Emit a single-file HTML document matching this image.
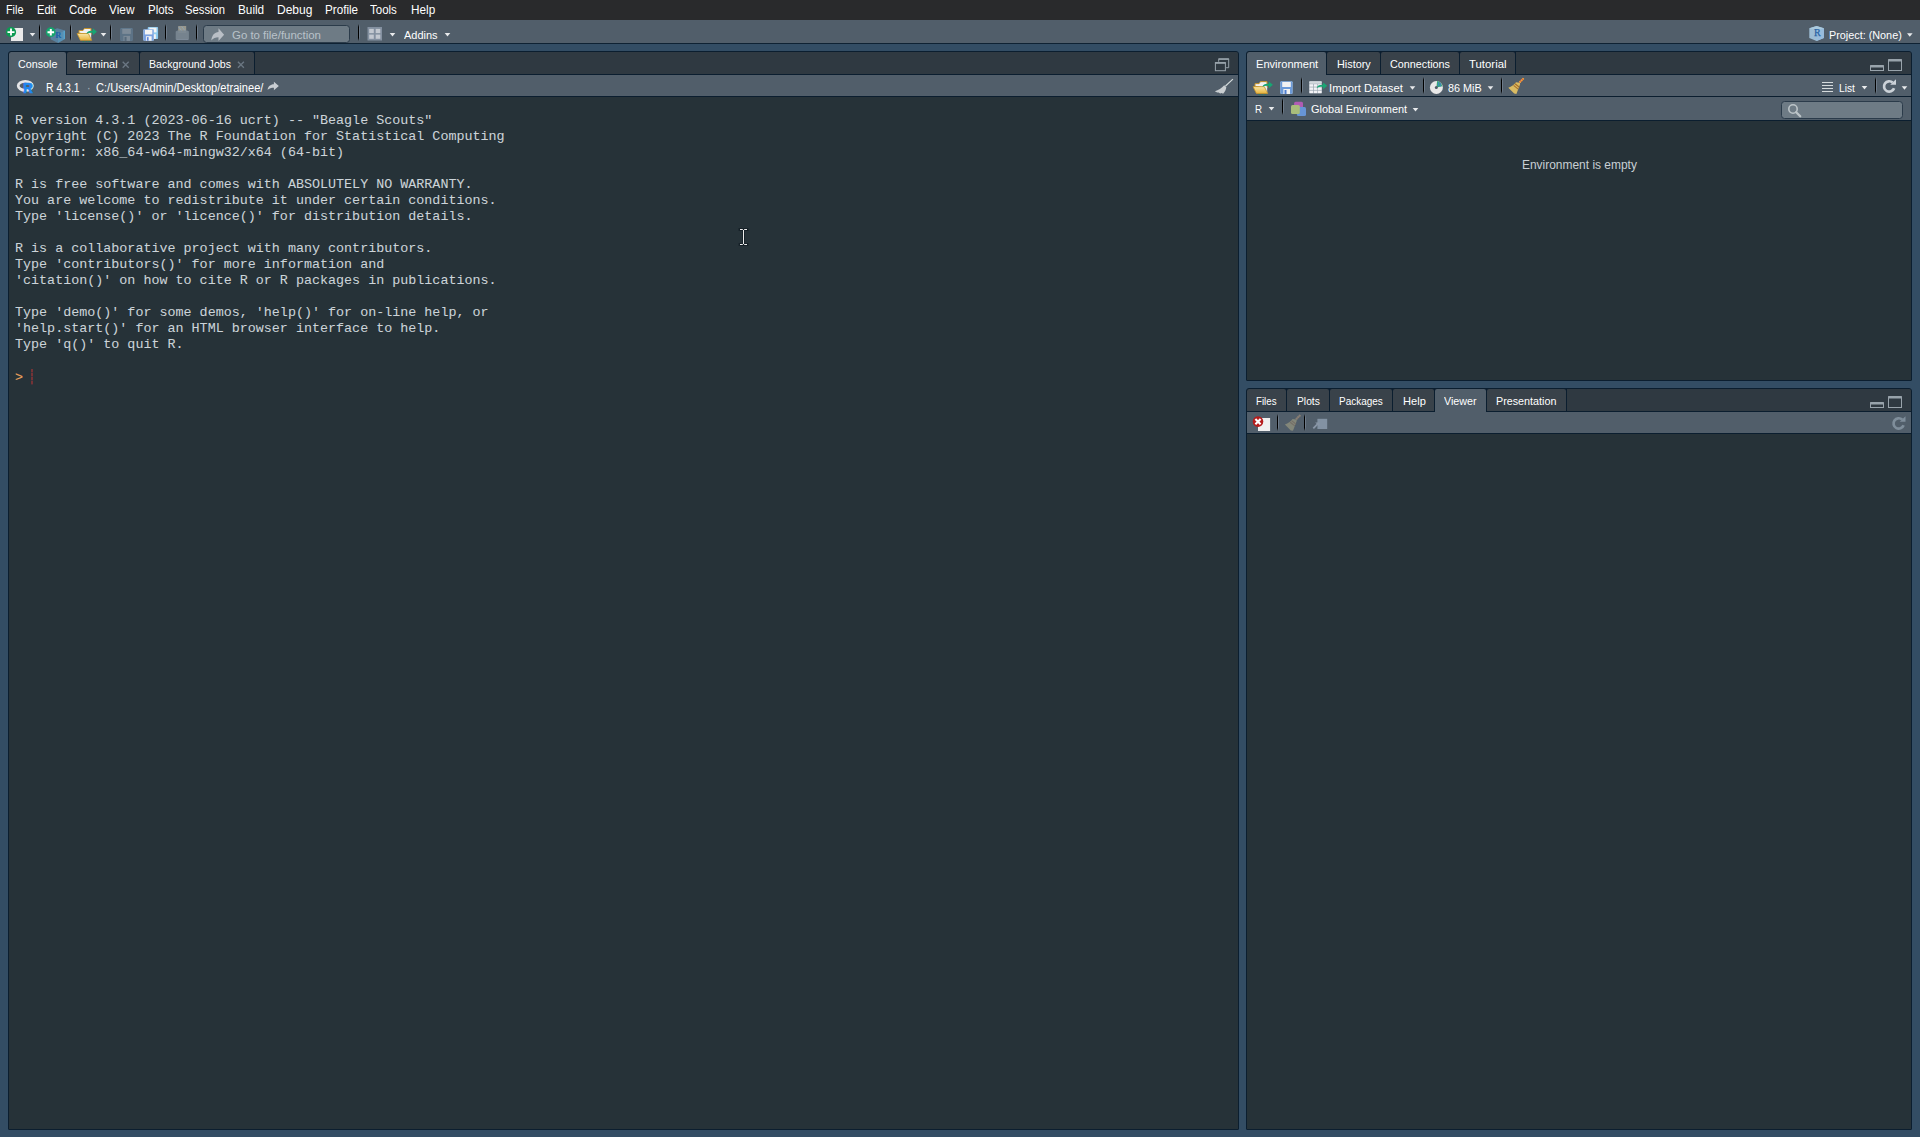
<!DOCTYPE html>
<html lang="en"><head><meta charset="utf-8"><title>RStudio</title>
<style>
html,body{margin:0;padding:0}
body{width:1920px;height:1137px;overflow:hidden;background:#334d64;position:relative;font-family:"Liberation Sans",sans-serif;color:#fff}
#menubar{position:absolute;left:0;top:0;width:1920px;height:20px;background:#292a2c}
#toolbar{position:absolute;left:0;top:20px;width:1920px;height:23px;background:#515e6a;border-bottom:1px solid #0f2233}
.panel{position:absolute;box-sizing:border-box;border:1px solid #0b1e2f;border-radius:3px 3px 1px 1px;background:#263238;overflow:hidden}
.tabs{position:absolute;left:0;top:0;right:0;height:22px;background:#2f3941;border-bottom:1px solid #0b1e2f}
.tabwrap{position:absolute;left:0;top:0;height:22px;background:#0b1e2f}
.tab{position:absolute;top:0;height:22px;background:#39424a;border-radius:2px 2px 0 0}
.tab.act{background:#515e6a;height:23px}
.tb{position:absolute;left:0;right:0;background:#515e6a;border-bottom:1px solid #0b1e2f}
.inp{position:absolute;box-sizing:border-box;background:#6e7b85;border:1px solid #2b3b4a;border-radius:3.5px}
#labels .t{position:absolute;white-space:pre;line-height:16px;transform-origin:0 0;color:#fff}
.f11{font-size:11px}.f12{font-size:12px}
#console{position:absolute;margin:0;left:6px;top:61px;font-family:"Liberation Mono","DejaVu Sans Mono",monospace;font-size:13.38px;line-height:16px;color:#ccd4d9;-webkit-text-stroke:0.06px #ccd4d9;white-space:pre}
#console .p{position:relative;top:1px;color:#eba25c;-webkit-text-stroke:0.1px #eba25c}
#cursor{position:absolute;left:31px;top:369px;width:2px;height:16px;background:repeating-linear-gradient(180deg,#733336 0 3px,#45303a 3px 4px)}

</style></head>
<body>
<div id="menubar"></div>
<div id="toolbar"></div>

<!-- main toolbar widgets -->
<div class="inp" style="left:203px;top:25px;width:147px;height:18px"></div>

<!-- left panel -->
<div class="panel" style="left:8px;top:51px;width:1231px;height:1079px">
  <div class="tabs">
    <div class="tabwrap" style="width:246px">
      <div class="tab act" style="left:0;width:57px"></div>
      <div class="tab" style="left:58px;width:72px"></div>
      <div class="tab" style="left:131px;width:114px"></div>
    </div>
  </div>
  <div class="tb" style="top:23px;height:21px"></div>
  <pre id="console">R version 4.3.1 (2023-06-16 ucrt) -- "Beagle Scouts"
Copyright (C) 2023 The R Foundation for Statistical Computing
Platform: x86_64-w64-mingw32/x64 (64-bit)

R is free software and comes with ABSOLUTELY NO WARRANTY.
You are welcome to redistribute it under certain conditions.
Type 'license()' or 'licence()' for distribution details.

R is a collaborative project with many contributors.
Type 'contributors()' for more information and
'citation()' on how to cite R or R packages in publications.

Type 'demo()' for some demos, 'help()' for on-line help, or
'help.start()' for an HTML browser interface to help.
Type 'q()' to quit R.

<span class="p">&gt;</span> </pre>
</div>

<div id="cursor"></div>

<!-- right top panel -->
<div class="panel" style="left:1246px;top:51px;width:666px;height:330px">
  <div class="tabs">
    <div class="tabwrap" style="width:269px">
      <div class="tab act" style="left:0;width:79px"></div>
      <div class="tab" style="left:80px;width:53px"></div>
      <div class="tab" style="left:134px;width:78px"></div>
      <div class="tab" style="left:213px;width:55px"></div>
    </div>
  </div>
  <div class="tb" style="top:23px;height:21px"></div>
  <div class="tb" style="top:45px;height:23px"></div>
</div>
<div class="inp" style="left:1781px;top:101px;width:122px;height:18px"></div>

<!-- right bottom panel -->
<div class="panel" style="left:1246px;top:388px;width:666px;height:742px">
  <div class="tabs">
    <div class="tabwrap" style="width:320px">
      <div class="tab" style="left:0;width:39px"></div>
      <div class="tab" style="left:40px;width:42px"></div>
      <div class="tab" style="left:83px;width:62px"></div>
      <div class="tab" style="left:146px;width:41px"></div>
      <div class="tab act" style="left:188px;width:51px"></div>
      <div class="tab" style="left:240px;width:79px"></div>
    </div>
  </div>
  <div class="tb" style="top:23px;height:21px"></div>
</div>
<svg id="icons" width="1920" height="1137" viewBox="0 0 1920 1137" style="position:absolute;left:0;top:0;pointer-events:none"><defs><linearGradient id="sepd" x1="0" y1="0" x2="0" y2="1"><stop offset="0" stop-color="#000" stop-opacity="0"/><stop offset=".18" stop-color="#000"/><stop offset=".82" stop-color="#000"/><stop offset="1" stop-color="#000" stop-opacity="0"/></linearGradient><linearGradient id="sepl" x1="0" y1="0" x2="0" y2="1"><stop offset="0" stop-color="#8a97a8" stop-opacity="0"/><stop offset=".25" stop-color="#8a97a8" stop-opacity=".5"/><stop offset=".75" stop-color="#8a97a8" stop-opacity=".5"/><stop offset="1" stop-color="#8a97a8" stop-opacity="0"/></linearGradient><linearGradient id="fold" x1="0" y1="0" x2="0" y2="1"><stop offset="0" stop-color="#f7e6a8"/><stop offset="1" stop-color="#e9b43c"/></linearGradient></defs>
<g transform="translate(6,27)"><rect x="5" y="1" width="12" height="13" fill="#ebebeb"/><circle cx="5" cy="5.1" r="5.1" fill="#0c9a52"/><path d="M1.5,4.2h2.6v-2.6h1.8v2.6h2.6v1.8h-2.6v2.6h-1.8v-2.6h-2.6z" fill="#fff"/></g>
<path d="M29.7,33 h5.6 l-2.8,3.5 z" fill="#e8eaec"/>
<rect x="39" y="24" width="1" height="17" fill="url(#sepd)"/><rect x="40" y="24" width="1" height="17" fill="url(#sepl)"/>
<g transform="translate(46,27)"><path d="M11.2,1.2 l7.8,2.4 v8.4 l-7,4 l-7.4,-3.8 v-8.2 z" fill="#5fa6d6" fill-opacity=".5"/><path d="M12,7 l7,-3.4 v8.4 l-7,4 z" fill="#5bb4e0" fill-opacity=".3"/><rect x="17.6" y="3.8" width="1.4" height="8.2" fill="#58b6e2" fill-opacity=".55"/><text x="9.3" y="11.2" font-family="Liberation Serif,serif" font-weight="bold" font-size="8.5" fill="#1b5fa8">R</text><circle cx="4.8" cy="5.2" r="4.9" fill="#14a46c"/><path d="M1.5,4.2h2.3v-2.3h2v2.3h2.3v2h-2.3v2.3h-2v-2.3h-2.3z" fill="#fff"/></g>
<rect x="70" y="24" width="1" height="17" fill="url(#sepd)"/><rect x="71" y="24" width="1" height="17" fill="url(#sepl)"/>
<g transform="translate(76.5,27.1)"><path d="M2.5,6 v-2.6 h4 l1.4,-2 h6.6 v6.5 z" fill="#f1f1f4" stroke="#c9952a" stroke-width="1"/><path d="M11.5,6.2 h3.2 v6 l-1.5,0.3 z" fill="#e9eef0"/><path d="M0.6,6.4 h11.2 l3.4,6.8 h-11.3 z" fill="url(#fold)" stroke="#c9952a" stroke-width=".8"/><path d="M9.9,6.6 c0.6,-2.6 3,-3.3 6.4,-3.0 v-2.4 l4.1,3.4 l-4.1,3.5 v-2.4 c-2.4,-0.3 -4.6,0.1 -6.4,0.9 z" fill="#17a673"/><rect x="6.3" y="14" width="1" height="1" fill="#1c8d62"/><rect x="9.3" y="14" width="1" height="1" fill="#1c8d62"/><rect x="12.2" y="14" width="1" height="1" fill="#1c8d62"/></g>
<path d="M100.7,33 h5.6 l-2.8,3.5 z" fill="#e8eaec"/>
<rect x="110" y="24" width="1" height="17" fill="url(#sepd)"/><rect x="111" y="24" width="1" height="17" fill="url(#sepl)"/>
<g transform="translate(120.25,28.1)"><rect x="0" y="0" width="12.5" height="12.8" rx="1" fill="#607a90"/><rect x="0.7" y="0.6" width="11.1" height="11.8" fill="#5d7386"/><rect x="2" y="0.8" width="8.6" height="5" fill="#7d8b98"/><rect x="3.2" y="7.8" width="6.6" height="5" fill="#7d8b98"/><rect x="4.3" y="8.8" width="2" height="4" fill="#56697a"/></g>
<g transform="translate(147.7,27) scale(0.83,0.93)"><rect x="0" y="0" width="12.5" height="12.8" rx="1" fill="#8ac4ee"/><rect x="0.7" y="0.6" width="11.1" height="11.8" fill="#8fcdf0"/><rect x="2" y="0.8" width="8.6" height="5" fill="#f4f4f4"/><rect x="3.2" y="7.8" width="6.6" height="5" fill="#f4f4f4"/><rect x="4.3" y="8.8" width="2" height="4" fill="#8fcdf0"/></g>
<g transform="translate(143.2,29.2) scale(0.86,0.9)"><rect x="0" y="0" width="12.5" height="12.8" rx="1" fill="#9cc0ea"/><rect x="0.7" y="0.6" width="11.1" height="11.8" fill="#7ba1e0"/><rect x="2" y="0.8" width="8.6" height="5" fill="#f4f4f4"/><rect x="3.2" y="7.8" width="6.6" height="5" fill="#f4f4f4"/><rect x="4.3" y="8.8" width="2" height="4" fill="#5f86d8"/></g>
<rect x="165" y="24" width="1" height="17" fill="url(#sepd)"/><rect x="166" y="24" width="1" height="17" fill="url(#sepl)"/>
<g transform="translate(174.7,26)"><rect x="3.5" y="0" width="8" height="7" fill="#97978d"/><path d="M4,1 l3,4 M7,0.5 l3.5,4.5" stroke="#8ea3b5" stroke-width="1"/><path d="M1,5.6 l1.6,-1 h10 l1.6,1 v7.8 h-13.2z" fill="#7a8792" fill-opacity=".9"/><rect x="1.6" y="13" width="12" height="1" fill="#7d8a98"/></g>
<rect x="196" y="24" width="1" height="17" fill="url(#sepd)"/><rect x="197" y="24" width="1" height="17" fill="url(#sepl)"/>
<g transform="translate(211,28)"><path d="M0.3,12.4 c0.6,-5 3.2,-8.3 7.2,-8.4 v-3.7 l5.6,6.5 l-5.6,6.3 v-3.9 c-3,0 -5.2,0.9 -7.2,3.2 z" fill="#b9bfc6"/></g>
<rect x="358" y="24" width="1" height="17" fill="url(#sepd)"/><rect x="359" y="24" width="1" height="17" fill="url(#sepl)"/>
<g transform="translate(367.5,27)"><rect x="0" y="0" width="14.5" height="13.5" fill="#8390a0"/><rect x="1.7" y="1.9" width="4.6" height="4.2" fill="#c2c8d0"/><rect x="1.7" y="7.6" width="4.6" height="4.2" fill="#c2c8d0"/><rect x="8.2" y="1.9" width="4.6" height="4.2" fill="#c2c8d0"/><rect x="8.2" y="7.6" width="4.6" height="4.2" fill="#c2c8d0"/></g>
<path d="M389.7,33 h5.6 l-2.8,3.5 z" fill="#e8eaec"/>
<path d="M444.7,33 h5.6 l-2.8,3.5 z" fill="#e8eaec"/>
<g transform="translate(1809.3,26)"><path d="M7.3,0 l7.3,2.3 v9.7 l-7.3,3 l-7.3,-3 v-9.7 z" fill="#9dbdd5"/><path d="M7.3,4.6 l7.3,-2.3 v9.7 l-7.3,3 z" fill="#98bcdc"/><path d="M7.3,0 l7.3,2.3 l-7.3,2.3 l-7.3,-2.3 z" fill="#a9c9de"/><text x="4.6" y="10.2" font-family="Liberation Serif,serif" font-size="10" fill="#2a64a4" stroke="#2a64a4" stroke-width=".25">R</text></g>
<path d="M1907.0,33.2 h5.6 l-2.8,3.5 z" fill="#e8eaec"/>
<g transform="translate(122.3,61.4)"><path d="M0.4,0.4 l6,6 M6.4,0.4 l-6,6" stroke="#6b7783" stroke-width="1.35"/></g>
<g transform="translate(237.5,61.4)"><path d="M0.4,0.4 l6,6 M6.4,0.4 l-6,6" stroke="#6b7783" stroke-width="1.35"/></g>
<g transform="translate(1214.9,58.2)"><path d="M3.8,3.6 v-2.6 h10 v8.5 h-2.6" fill="none" stroke="#98a3ab" stroke-width="1"/><rect x="3.3" y="0" width="11" height="1.6" rx=".8" fill="#98a3ab"/><rect x="0.5" y="4.6" width="10" height="7.9" fill="none" stroke="#98a3ab" stroke-width="1"/><rect x="0" y="3.8" width="11" height="1.7" rx=".8" fill="#98a3ab"/></g>
<g transform="translate(17,80)"><ellipse cx="8.3" cy="5.8" rx="7.1" ry="4.5" fill="none" stroke="#e6e6e8" stroke-width="2.8"/><text x="6.3" y="13" font-family="Liberation Sans,sans-serif" font-weight="bold" font-size="14" fill="#1f87f0" stroke="#1f87f0" stroke-width=".7" textLength="9.6" lengthAdjust="spacingAndGlyphs">R</text></g>
<g transform="translate(267.3,81.6) scale(.88,.66)"><path d="M0.3,12.4 c0.6,-5 3.2,-8.3 7.2,-8.4 v-3.7 l5.6,6.5 l-5.6,6.3 v-3.9 c-3,0 -5.2,0.9 -7.2,3.2 z" fill="#c9ced3"/></g>
<g transform="translate(1214.6,78.7)"><path d="M18.3,0.4 L10.9,7.3" stroke="#d6dddd" stroke-width="1.15"/><path d="M9.6,6.6 l2.1,1.8 c-0.2,2.6 -1.4,5 -3.2,6.6 l-1.5,-0.6 l-1.4,0.3 l-1.6,-0.9 l-1.4,0.1 l-2.4,-1.3 c3.6,-0.9 6.9,-3.2 9.4,-6 z" fill="#c9ced1"/></g>
<g transform="translate(743,230)"><path d="M-3,-0.5 h3 M1,-0.5 h3 M0.5,0 v14 M-3,14.5 h3 M1,14.5 h3" stroke="#121c23" stroke-opacity=".75" stroke-width="2.8" fill="none" stroke-linecap="square"/><path d="M-3,-0.5 h2.8 M1.2,-0.5 h2.8 M0.5,0 v14 M-3,14.5 h2.8 M1.2,14.5 h2.8" stroke="#ececec" stroke-width="1" fill="none"/></g>
<g transform="translate(1870,65)"><rect x="0.5" y="1" width="13" height="4.5" fill="none" stroke="#98a3ab" stroke-width="1"/><rect x="0" y="0" width="14" height="2.4" rx="1" fill="#98a3ab"/></g>
<g transform="translate(1888,59)"><rect x="0.5" y="1" width="13" height="10.5" fill="none" stroke="#98a3ab" stroke-width="1"/><rect x="0" y="0" width="14" height="2.4" rx="1" fill="#98a3ab"/></g>
<g transform="translate(1252.5,80.25)"><path d="M2.5,6 v-2.6 h4 l1.4,-2 h6.6 v6.5 z" fill="#f1f1f4" stroke="#c9952a" stroke-width="1"/><path d="M11.5,6.2 h3.2 v6 l-1.5,0.3 z" fill="#e9eef0"/><path d="M0.6,6.4 h11.2 l3.4,6.8 h-11.3 z" fill="url(#fold)" stroke="#c9952a" stroke-width=".8"/><path d="M9.9,6.6 c0.6,-2.6 3,-3.3 6.4,-3.0 v-2.4 l4.1,3.4 l-4.1,3.5 v-2.4 c-2.4,-0.3 -4.6,0.1 -6.4,0.9 z" fill="#17a673"/><rect x="6.3" y="14" width="1" height="1" fill="#1c8d62"/><rect x="9.3" y="14" width="1" height="1" fill="#1c8d62"/><rect x="12.2" y="14" width="1" height="1" fill="#1c8d62"/></g>
<g transform="translate(1280.2,81.2)"><rect x="0" y="0" width="12.5" height="12.8" rx="1" fill="#8fb6e6"/><rect x="0.7" y="0.6" width="11.1" height="11.8" fill="#6c9ad8"/><rect x="2" y="0.8" width="8.6" height="5" fill="#f2f2f2"/><rect x="3.2" y="7.8" width="6.6" height="5" fill="#f2f2f2"/><rect x="4.3" y="8.8" width="2" height="4" fill="#4f7fd0"/></g>
<rect x="1301" y="77" width="1" height="17" fill="url(#sepd)"/><rect x="1302" y="77" width="1" height="17" fill="url(#sepl)"/>
<g transform="translate(1309,81)"><rect x="0" y="0" width="13" height="12.4" rx="1" fill="#9aa5b0"/><rect x="0.3" y="0.2" width="12.4" height="2.5" rx="1" fill="#d4d9de"/><rect x="0.5" y="3.2" width="3.6" height="2.5" fill="#f3f3f7"/><rect x="0.5" y="6.4" width="3.6" height="2.5" fill="#f3f3f7"/><rect x="0.5" y="9.6" width="3.6" height="2.5" fill="#f3f3f7"/><rect x="4.8" y="3.2" width="3.6" height="2.5" fill="#f3f3f7"/><rect x="4.8" y="6.4" width="3.6" height="2.5" fill="#f3f3f7"/><rect x="4.8" y="9.6" width="3.6" height="2.5" fill="#f3f3f7"/><rect x="9.0" y="3.2" width="3.6" height="2.5" fill="#f3f3f7"/><rect x="9.0" y="6.4" width="3.6" height="2.5" fill="#f3f3f7"/><rect x="9.0" y="9.6" width="3.6" height="2.5" fill="#f3f3f7"/><path d="M7.6,7.2 c0.4,-2.6 3,-3.6 6.5,-3.4 v-2.4 l4.2,3.3 l-4.2,3.5 v-2.3 c-2.5,-0.2 -4.6,0.2 -6.5,1.3 z" fill="#1aa573"/></g>
<path d="M1409.7,86.2 h5.6 l-2.8,3.5 z" fill="#e8eaec"/>
<rect x="1423" y="77" width="1" height="17" fill="url(#sepd)"/><rect x="1424" y="77" width="1" height="17" fill="url(#sepl)"/>
<g transform="translate(1429.9,81)"><circle cx="6.5" cy="6.5" r="6.5" fill="#e8e8e8"/><path d="M6.5,6.5 L7.2,0.1 A6.5,6.5 0 0 1 12.4,5.2 z" fill="#36a57a"/><path d="M8.6,1.2 v4 M10.4,2 v3.6" stroke="#3f7fd0" stroke-width=".8"/><circle cx="6.4" cy="6.4" r="1.5" fill="#4d5b66"/></g>
<path d="M1487.7,86.2 h5.6 l-2.8,3.5 z" fill="#e8eaec"/>
<rect x="1501" y="77" width="1" height="17" fill="url(#sepd)"/><rect x="1502" y="77" width="1" height="17" fill="url(#sepl)"/>
<g transform="translate(1508,78)"><path d="M15.6,0.4 L11.3,4.7" stroke="#e0603f" stroke-width="1.9"/><path d="M15.6,0.4 L11.3,4.7" stroke="#e8b23c" stroke-width="1.9" stroke-dasharray="1.1 1.1"/><path d="M8,4.3 l3.7,0.4 l0.5,1.3 l-3.8,10 l-2.2,-0.4 l-5.9,-5.8 c3.2,-1 5.8,-3 7.7,-5.5 z" fill="#d9bb63"/><path d="M5.6,7.4 l4.6,3.7 M7,5.8 l4.4,3.5" stroke="#a8702a" stroke-width="1.2"/></g>
<g transform="translate(1822,82)"><rect x="0" y="0" width="11" height="1" fill="#d5dadc"/><rect x="0" y="3" width="11" height="1" fill="#d5dadc"/><rect x="0" y="6" width="11" height="1" fill="#d5dadc"/><rect x="0" y="9" width="11" height="1" fill="#d5dadc"/></g>
<path d="M1861.7,86 h5.6 l-2.8,3.5 z" fill="#e8eaec"/>
<rect x="1875" y="77" width="1" height="17" fill="url(#sepd)"/><rect x="1876" y="77" width="1" height="17" fill="url(#sepl)"/>
<g transform="translate(1882.5,79)"><path d="M10.2,3.6 A5.2,5.2 0 1 0 11.6,9.3" fill="none" stroke="#ccd2d8" stroke-width="2.7"/><path d="M13.5,0.2 v5.6 h-5.8 z" fill="#ccd2d8"/></g>
<path d="M1901.7,86.2 h5.6 l-2.8,3.5 z" fill="#e8eaec"/>
<path d="M1268.7,107 h5.6 l-2.8,3.5 z" fill="#e8eaec"/>
<rect x="1282" y="98" width="1" height="17" fill="url(#sepd)"/><rect x="1283" y="98" width="1" height="17" fill="url(#sepl)"/>
<g transform="translate(1291,101.8)"><rect x="3.1" y="0" width="8.9" height="9" rx="1.5" fill="#b05cb4"/><rect x="5.9" y="5.3" width="9.1" height="8.9" rx="1.5" fill="#6795d6"/><rect x="0" y="3.3" width="8.8" height="8.8" rx="1.5" fill="#a9bd7b"/></g>
<path d="M1412.7,108 h5.6 l-2.8,3.5 z" fill="#e8eaec"/>
<g transform="translate(1788,104)"><circle cx="5" cy="5" r="4.2" fill="none" stroke="#bcc4c8" stroke-width="1.6"/><path d="M8.2,8.2 l4,4" stroke="#bcc4c8" stroke-width="2.3" stroke-linecap="round"/></g>
<g transform="translate(1870,402)"><rect x="0.5" y="1" width="13" height="4.5" fill="none" stroke="#98a3ab" stroke-width="1"/><rect x="0" y="0" width="14" height="2.4" rx="1" fill="#98a3ab"/></g>
<g transform="translate(1888,396)"><rect x="0.5" y="1" width="13" height="10.5" fill="none" stroke="#98a3ab" stroke-width="1"/><rect x="0" y="0" width="14" height="2.4" rx="1" fill="#98a3ab"/></g>
<g transform="translate(1252.8,416)"><rect x="5.2" y="2" width="12.1" height="13" fill="#efefef"/><circle cx="5.2" cy="5.6" r="5.3" fill="#b51c1c"/><path d="M2.6,3 l5.2,5.2 M7.8,3 l-5.2,5.2" stroke="#fff" stroke-width="2.1"/></g>
<rect x="1277" y="414" width="1" height="17" fill="url(#sepd)"/><rect x="1278" y="414" width="1" height="17" fill="url(#sepl)"/>
<g transform="translate(1284.6,414.8)" opacity="0.6"><path d="M15.6,0.4 L11.3,4.7" stroke="#a58574" stroke-width="1.9"/><path d="M15.6,0.4 L11.3,4.7" stroke="#a89a7c" stroke-width="1.9" stroke-dasharray="1.1 1.1"/><path d="M8,4.3 l3.7,0.4 l0.5,1.3 l-3.8,10 l-2.2,-0.4 l-5.9,-5.8 c3.2,-1 5.8,-3 7.7,-5.5 z" fill="#a3a283"/><path d="M5.6,7.4 l4.6,3.7 M7,5.8 l4.4,3.5" stroke="#8f7a66" stroke-width="1.2"/></g>
<rect x="1304" y="414" width="1" height="17" fill="url(#sepd)"/><rect x="1305" y="414" width="1" height="17" fill="url(#sepl)"/>
<g transform="translate(1313,418.8)"><rect x="4.4" y="0" width="9.8" height="10.2" fill="#8292a3"/><path d="M0.3,9.6 l5.2,-5.2" stroke="#8896a6" stroke-width="1.8"/><path d="M2.2,3.6 h4.4 v4.4 z" fill="#8896a6"/></g>
<g transform="translate(1892,416)"><path d="M10.2,3.6 A5.2,5.2 0 1 0 11.6,9.3" fill="none" stroke="#7f8e9b" stroke-width="2.7"/><path d="M13.5,0.2 v5.6 h-5.8 z" fill="#7f8e9b"/></g></svg>
<div id="labels">
<span class="t f12" style="left:6.25px;top:2.00px;transform:scaleX(0.9028)">File</span>
<span class="t f12" style="left:36.50px;top:2.00px;transform:scaleX(0.9277)">Edit</span>
<span class="t f12" style="left:69.00px;top:2.00px;transform:scaleX(0.9616)">Code</span>
<span class="t f12" style="left:109.00px;top:2.00px;transform:scaleX(0.9875)">View</span>
<span class="t f12" style="left:147.50px;top:2.00px;transform:scaleX(0.9559)">Plots</span>
<span class="t f12" style="left:185.00px;top:2.00px;transform:scaleX(0.9377)">Session</span>
<span class="t f12" style="left:237.50px;top:2.00px;transform:scaleX(0.9804)">Build</span>
<span class="t f12" style="left:276.50px;top:2.00px;transform:scaleX(1.0018)">Debug</span>
<span class="t f12" style="left:324.60px;top:2.00px;transform:scaleX(0.9726)">Profile</span>
<span class="t f12" style="left:370.25px;top:2.00px;transform:scaleX(0.9585)">Tools</span>
<span class="t f12" style="left:410.50px;top:2.00px;transform:scaleX(0.9798)">Help</span>
<span class="t f11" style="left:232.10px;top:26.50px;transform:scaleX(1.0388);color:#b9c2c9">Go to file/function</span>
<span class="t f11" style="left:404.00px;top:26.50px;transform:scaleX(0.9961)">Addins</span>
<span class="t f11" style="left:1829.20px;top:27.00px;transform:scaleX(0.9835)">Project: (None)</span>
<span class="t f11" style="left:17.90px;top:56.00px;transform:scaleX(0.9766)">Console</span>
<span class="t f11" style="left:75.80px;top:56.00px;transform:scaleX(1.0019)">Terminal</span>
<span class="t f11" style="left:149.30px;top:56.00px;transform:scaleX(0.9649)">Background Jobs</span>
<span class="t f12" style="left:46.30px;top:80.00px;transform:scaleX(0.8689)">R 4.3.1</span>
<span class="t f12" style="left:96.30px;top:80.00px;transform:scaleX(0.9227)">C:/Users/Admin/Desktop/etrainee/</span>
<span class="t f12" style="left:86.50px;top:80.00px;transform:scaleX(0.9000);color:#a9b3bc">·</span>
<span class="t f11" style="left:1255.90px;top:56.00px;transform:scaleX(1.0066)">Environment</span>
<span class="t f11" style="left:1336.50px;top:56.00px;transform:scaleX(0.9849)">History</span>
<span class="t f11" style="left:1389.80px;top:56.00px;transform:scaleX(0.9797)">Connections</span>
<span class="t f11" style="left:1469.20px;top:56.00px;transform:scaleX(1.0341)">Tutorial</span>
<span class="t f11" style="left:1329.18px;top:80.00px;transform:scaleX(1.0227)">Import Dataset</span>
<span class="t f11" style="left:1447.90px;top:79.50px;transform:scaleX(0.9838)">86 MiB</span>
<span class="t f11" style="left:1839.20px;top:79.50px;transform:scaleX(0.9261)">List</span>
<span class="t f11" style="left:1255.00px;top:101.00px;transform:scaleX(0.8875)">R</span>
<span class="t f11" style="left:1310.60px;top:101.00px;transform:scaleX(0.9954)">Global Environment</span>
<span class="t f12" style="left:1521.80px;top:157.00px;transform:scaleX(0.9959);color:#c8cfd4">Environment is empty</span>
<span class="t f11" style="left:1256.25px;top:393.00px;transform:scaleX(0.8830)">Files</span>
<span class="t f11" style="left:1296.70px;top:393.00px;transform:scaleX(0.9337)">Plots</span>
<span class="t f11" style="left:1339.00px;top:393.00px;transform:scaleX(0.9076)">Packages</span>
<span class="t f11" style="left:1402.50px;top:393.00px;transform:scaleX(1.0086)">Help</span>
<span class="t f11" style="left:1444.20px;top:393.00px;transform:scaleX(0.9745)">Viewer</span>
<span class="t f11" style="left:1496.00px;top:393.00px;transform:scaleX(0.9774)">Presentation</span>
</div>
</body></html>
